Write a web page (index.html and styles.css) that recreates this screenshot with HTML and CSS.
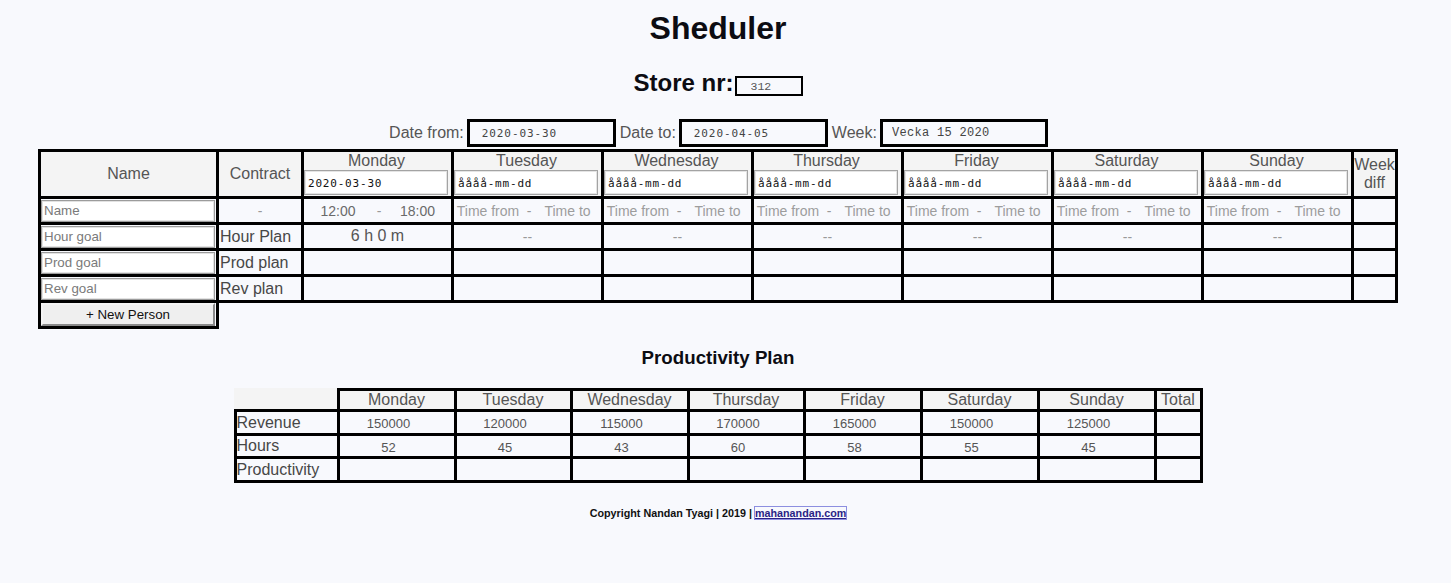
FILE: index.html
```html
<!DOCTYPE html>
<html lang="sv">
<head>
<meta charset="utf-8">
<title>Sheduler</title>
<link rel="stylesheet" href="styles.css">
</head>
<body>
<div class="page">
  <h1 class="title">Sheduler</h1>
  <h2 class="store">Store nr:<input class="store-input" type="text" value="312"></h2>
  <div class="period">
    <label class="period-label">Date from:</label>
    <input class="period-input" type="text" value="2020-03-30">
    <label class="period-label">Date to:</label>
    <input class="period-input" type="text" value="2020-04-05">
    <label class="period-label">Week:</label>
    <input class="period-input week" type="text" value="Vecka 15 2020">
  </div>

  <table class="schedule">
    <colgroup>
      <col class="col-name">
      <col class="col-contract">
      <col class="col-day"><col class="col-day"><col class="col-day"><col class="col-day"><col class="col-day"><col class="col-day"><col class="col-day">
      <col class="col-diff">
    </colgroup>
    <thead>
      <tr class="head-row">
        <th class="head">Name</th>
        <th class="head">Contract</th>
        <th class="head day-head"><div class="day-name">Monday</div><input class="day-date" type="text" value="2020-03-30"></th>
        <th class="head day-head"><div class="day-name">Tuesday</div><input class="day-date" type="text" value="åååå-mm-dd"></th>
        <th class="head day-head"><div class="day-name">Wednesday</div><input class="day-date" type="text" value="åååå-mm-dd"></th>
        <th class="head day-head"><div class="day-name">Thursday</div><input class="day-date" type="text" value="åååå-mm-dd"></th>
        <th class="head day-head"><div class="day-name">Friday</div><input class="day-date" type="text" value="åååå-mm-dd"></th>
        <th class="head day-head"><div class="day-name">Saturday</div><input class="day-date" type="text" value="åååå-mm-dd"></th>
        <th class="head day-head"><div class="day-name">Sunday</div><input class="day-date" type="text" value="åååå-mm-dd"></th>
        <th class="head week-diff">Week diff</th>
      </tr>
    </thead>
    <tbody>
      <tr>
        <td class="name-cell"><input class="name-input" type="text" placeholder="Name"></td>
        <td class="center muted">-</td>
        <td><div class="time-pair"><input class="time" type="text" value="12:00"><span class="dash">-</span><input class="time to" type="text" value="18:00"></div></td>
        <td><div class="time-pair"><input class="time" type="text" placeholder="Time from"><span class="dash">-</span><input class="time to" type="text" placeholder="Time to"></div></td>
        <td><div class="time-pair"><input class="time" type="text" placeholder="Time from"><span class="dash">-</span><input class="time to" type="text" placeholder="Time to"></div></td>
        <td><div class="time-pair"><input class="time" type="text" placeholder="Time from"><span class="dash">-</span><input class="time to" type="text" placeholder="Time to"></div></td>
        <td><div class="time-pair"><input class="time" type="text" placeholder="Time from"><span class="dash">-</span><input class="time to" type="text" placeholder="Time to"></div></td>
        <td><div class="time-pair"><input class="time" type="text" placeholder="Time from"><span class="dash">-</span><input class="time to" type="text" placeholder="Time to"></div></td>
        <td><div class="time-pair"><input class="time" type="text" placeholder="Time from"><span class="dash">-</span><input class="time to" type="text" placeholder="Time to"></div></td>
        <td></td>
      </tr>
      <tr>
        <td class="name-cell"><input class="name-input" type="text" placeholder="Hour goal"></td>
        <td class="plan-label">Hour Plan</td>
        <td class="center hours">6 h 0 m</td>
        <td class="center muted">--</td>
        <td class="center muted">--</td>
        <td class="center muted">--</td>
        <td class="center muted">--</td>
        <td class="center muted">--</td>
        <td class="center muted">--</td>
        <td></td>
      </tr>
      <tr>
        <td class="name-cell"><input class="name-input" type="text" placeholder="Prod goal"></td>
        <td class="plan-label">Prod plan</td>
        <td></td><td></td><td></td><td></td><td></td><td></td><td></td><td></td>
      </tr>
      <tr>
        <td class="name-cell"><input class="name-input" type="text" placeholder="Rev goal"></td>
        <td class="plan-label">Rev plan</td>
        <td></td><td></td><td></td><td></td><td></td><td></td><td></td><td></td>
      </tr>
      <tr class="add-row">
        <td class="name-cell"><button class="add-btn" type="button">+ New Person</button></td>
        <td class="blank" colspan="9"></td>
      </tr>
    </tbody>
  </table>

  <h3 class="section-title">Productivity Plan</h3>

  <table class="prod">
    <colgroup>
      <col class="p-label">
      <col class="p-d1"><col class="p-d2"><col class="p-d1"><col class="p-d2"><col class="p-d1"><col class="p-d1"><col class="p-d1">
      <col class="p-total">
    </colgroup>
    <thead>
      <tr>
        <th class="corner"></th>
        <th class="p-head">Monday</th>
        <th class="p-head">Tuesday</th>
        <th class="p-head">Wednesday</th>
        <th class="p-head">Thursday</th>
        <th class="p-head">Friday</th>
        <th class="p-head">Saturday</th>
        <th class="p-head">Sunday</th>
        <th class="p-head">Total</th>
      </tr>
    </thead>
    <tbody>
      <tr class="r-rev">
        <td class="row-label">Revenue</td>
        <td class="val">150000</td>
        <td class="val">120000</td>
        <td class="val">115000</td>
        <td class="val">170000</td>
        <td class="val">165000</td>
        <td class="val">150000</td>
        <td class="val">125000</td>
        <td></td>
      </tr>
      <tr class="r-hours">
        <td class="row-label">Hours</td>
        <td class="val">52</td>
        <td class="val">45</td>
        <td class="val">43</td>
        <td class="val">60</td>
        <td class="val">58</td>
        <td class="val">55</td>
        <td class="val">45</td>
        <td></td>
      </tr>
      <tr class="r-prod">
        <td class="row-label">Productivity</td>
        <td></td><td></td><td></td><td></td><td></td><td></td><td></td><td></td>
      </tr>
    </tbody>
  </table>

  <footer class="footer">Copyright Nandan Tyagi | 2019 | <a class="footer-link" href="#">mahanandan.com</a></footer>
</div>
</body>
</html>
```

FILE: styles.css
```css
html, body {
  background: #f8f9fd;
}
body {
  margin: 8px;
  font-family: "Liberation Sans", Arial, sans-serif;
  color: #111;
}
.page {
  width: 1420px;
  display: flex;
  flex-direction: column;
  align-items: center;
}

.title {
  margin: 2px 0 0;
  font-size: 32px;
  line-height: 37px;
  font-weight: bold;
  color: #0c0c12;
}

.store {
  margin: 22px 0 0;
  height: 28px;
  font-size: 24px;
  line-height: 28px;
  font-weight: bold;
  color: #0c0c12;
}
.store-input {
  box-sizing: border-box;
  width: 68px;
  height: 20px;
  margin: 0 0 0 1px;
  padding: 1px 2px 0 14px;
  border: 2px solid #000;
  background: transparent;
  font-family: "Liberation Mono", monospace;
  font-size: 11.5px;
  color: #555;
  vertical-align: 1px;
}

.period {
  margin-top: 22px;
  display: flex;
  align-items: center;
  gap: 3px;
  height: 28px;
}
.period-label {
  font-size: 16px;
  color: #555;
  margin-left: 1px;
}
.period-input {
  box-sizing: border-box;
  width: 149px;
  height: 28px;
  padding: 0 0 0 12px;
  border: 3px solid #000;
  background: transparent;
  font-family: "DejaVu Sans Mono", monospace;
  font-size: 11px;
  letter-spacing: 0.9px;
  color: #444;
}
.period-input.week {
  width: 168px;
  padding-left: 9px;
  letter-spacing: 0.3px;
  font-family: "Liberation Mono", monospace;
  font-size: 12px;
}

/* main schedule table */
.schedule {
  margin-top: 2px;
  border-collapse: separate;
  border-spacing: 0;
  table-layout: fixed;
  width: 1360px;
  border-top: 3px solid #000;
  border-left: 3px solid #000;
}
.col-name { width: 178px; }
.col-contract { width: 85px; }
.col-day { width: 150px; }
.col-diff { width: 44px; }

.schedule th,
.schedule td {
  box-sizing: border-box;
  padding: 0;
  border-right: 3px solid #000;
  border-bottom: 3px solid #000;
  vertical-align: middle;
}
.schedule td {
  height: 26px;
}
.schedule td.blank {
  border: 0;
}
.schedule th.head {
  height: 47px;
  background: #f4f4f4;
  font-weight: normal;
  font-size: 16px;
  color: #555;
  text-align: center;
}
.schedule th.day-head {
  vertical-align: top;
  padding: 0 2px 0 0;
}
.day-name {
  line-height: 18px;
  height: 18px;
}
.day-date {
  box-sizing: border-box;
  display: block;
  width: 144px;
  height: 25px;
  margin: 0;
  padding: 1px 3px 0;
  border: 1px solid #a3a3a3;
  box-shadow: inset 0 0 0 1px #e4e4e4;
  background: #fff;
  font-family: "DejaVu Sans Mono", monospace;
  font-size: 11px;
  letter-spacing: 0.8px;
  color: #111;
}
.schedule th.week-diff {
  line-height: 18px;
  padding: 0;
}

.name-input {
  box-sizing: border-box;
  display: block;
  width: 174px;
  height: 22px;
  margin: 0;
  padding: 1px 2px;
  border: 1px solid #9c9c9c;
  box-shadow: inset 0 0 0 1px #e2e2e2;
  background: #fff;
  font-family: "Liberation Sans", Arial, sans-serif;
  font-size: 13.33px;
  color: #222;
}
.name-input::placeholder {
  color: #7a7a7a;
}

.schedule td.center {
  text-align: center;
}
.schedule td.muted {
  font-size: 14px;
  color: #9a9a9a;
}
.schedule td.hours {
  font-size: 16px;
  color: #555;
  padding-bottom: 1px;
}
.schedule td.plan-label {
  padding: 0 0 0 1px;
  font-size: 16px;
  color: #474747;
}

.time-pair {
  display: flex;
  align-items: center;
}
.time {
  box-sizing: border-box;
  width: 68px;
  height: 20px;
  padding: 0;
  border: 0;
  background: transparent;
  font-family: "Liberation Sans", Arial, sans-serif;
  font-size: 14px;
  color: #6a6a6a;
  text-align: center;
}
.time.to {
  width: 63px;
}
.time::placeholder {
  color: #9d9d9d;
}
.dash {
  width: 14px;
  text-align: center;
  font-size: 14px;
  color: #9a9a9a;
}

.add-btn {
  box-sizing: border-box;
  display: block;
  width: 174px;
  height: 23px;
  margin: 0;
  padding: 0;
  border: 2px solid;
  border-color: #f4f4f4 #8a8a8a #8a8a8a #f4f4f4;
  background: #efefef;
  font-family: "Liberation Sans", Arial, sans-serif;
  font-size: 13.33px;
  color: #111;
}

/* productivity section */
.section-title {
  margin: 18px 0 0;
  font-size: 18.72px;
  line-height: 22px;
  font-weight: bold;
  color: #0c0c12;
}

.prod {
  margin-top: 19px;
  border-collapse: separate;
  border-spacing: 0;
  table-layout: fixed;
  width: 969px;
}
.p-label { width: 106px; }
.p-d1 { width: 117px; }
.p-d2 { width: 116px; }
.p-total { width: 46px; }

.prod th,
.prod td {
  box-sizing: border-box;
  padding: 0;
  border-right: 3px solid #000;
  border-bottom: 3px solid #000;
  vertical-align: middle;
}
.prod th {
  height: 24px;
  border-top: 3px solid #000;
  background: #f4f4f4;
  font-weight: normal;
  font-size: 16px;
  color: #555;
  text-align: center;
}
.prod th.corner {
  border-top: 0;
}
.prod td.row-label {
  border-left: 3px solid #000;
  font-size: 16px;
  color: #474747;
  text-align: left;
}
.r-rev td { height: 24px; }
.r-hours td { height: 23px; }
.r-prod td { height: 24px; }
.prod td.val {
  padding: 2px 16px 0 0;
  text-align: center;
  font-size: 13px;
  color: #555;
}

.footer {
  margin-top: 24px;
  font-size: 10.75px;
  line-height: 13px;
  font-weight: bold;
  color: #111;
}
.footer-link {
  color: #2a1f86;
  outline: 1px solid #8d8fe0;
  outline-offset: 0;
}
```
